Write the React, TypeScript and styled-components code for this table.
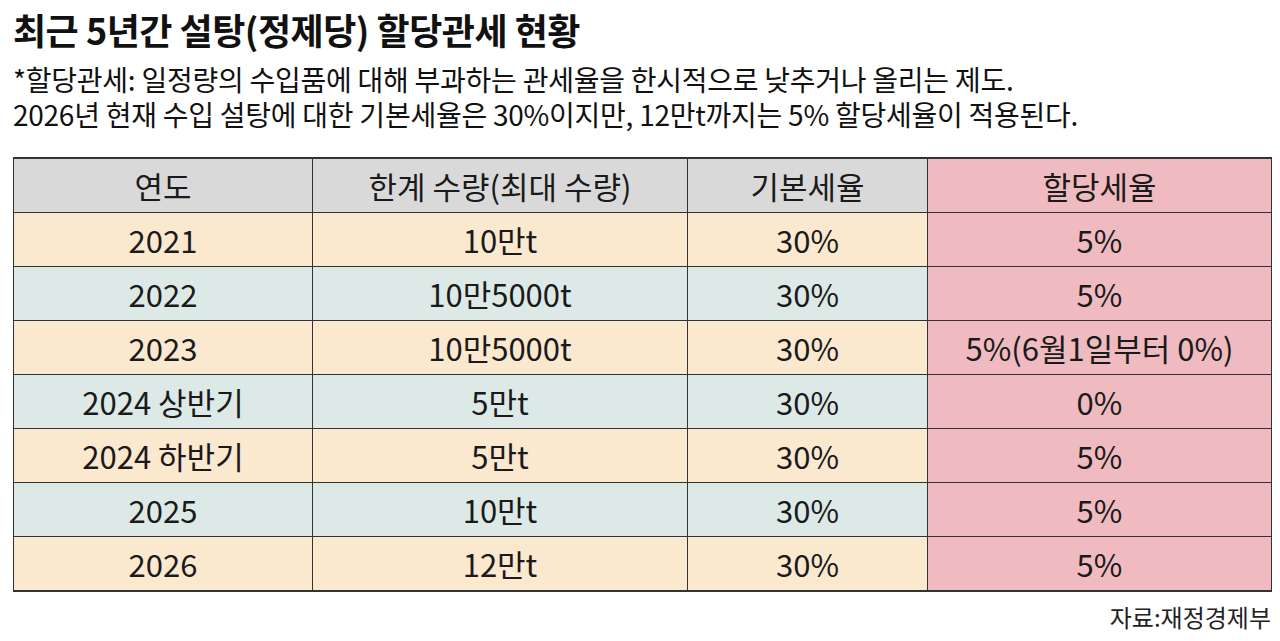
import React from 'react';
import styled, { createGlobalStyle } from 'styled-components';

interface QuotaRow {
  year: string;
  limit: string;
  baseRate: string;
  quotaRate: string;
}

const rows: QuotaRow[] = [
  { year: '2021', limit: '10만t', baseRate: '30%', quotaRate: '5%' },
  { year: '2022', limit: '10만5000t', baseRate: '30%', quotaRate: '5%' },
  { year: '2023', limit: '10만5000t', baseRate: '30%', quotaRate: '5%(6월1일부터 0%)' },
  { year: '2024 상반기', limit: '5만t', baseRate: '30%', quotaRate: '0%' },
  { year: '2024 하반기', limit: '5만t', baseRate: '30%', quotaRate: '5%' },
  { year: '2025', limit: '10만t', baseRate: '30%', quotaRate: '5%' },
  { year: '2026', limit: '12만t', baseRate: '30%', quotaRate: '5%' },
];

const GlobalStyle = createGlobalStyle`
  html, body {
    margin: 0;
    padding: 0;
    background: #ffffff;
  }
  body {
    font-family: "Noto Sans CJK KR", "Noto Sans", sans-serif;
    color: #1a1a1a;
  }
`;

const App: React.FC = () => {
  return (
    <>
      <GlobalStyle />
      <Page>
        <Title>최근 5년간 설탕(정제당) 할당관세 현황</Title>
        <Notes>
          <NoteLine>*할당관세: 일정량의 수입품에 대해 부과하는 관세율을 한시적으로 낮추거나 올리는 제도.</NoteLine>
          <NoteLine>2026년 현재 수입 설탕에 대한 기본세율은 30%이지만, 12만t까지는 5% 할당세율이 적용된다.</NoteLine>
        </Notes>
        <Table>
          <colgroup>
            <col style={{ width: 299 }} />
            <col style={{ width: 375 }} />
            <col style={{ width: 240 }} />
            <col style={{ width: 344 }} />
          </colgroup>
          <thead>
            <tr>
              <HeadCell>연도</HeadCell>
              <HeadCell>한계 수량(최대 수량)</HeadCell>
              <HeadCell>기본세율</HeadCell>
              <HeadCell $quota>할당세율</HeadCell>
            </tr>
          </thead>
          <tbody>
            {rows.map((row, i) => (
              <tr key={row.year}>
                <Cell $tone={i % 2 === 0 ? 'cream' : 'mint'}>{row.year}</Cell>
                <Cell $tone={i % 2 === 0 ? 'cream' : 'mint'}>{row.limit}</Cell>
                <Cell $tone={i % 2 === 0 ? 'cream' : 'mint'}>{row.baseRate}</Cell>
                <Cell $tone="pink">{row.quotaRate}</Cell>
              </tr>
            ))}
          </tbody>
        </Table>
        <Source>자료:재정경제부</Source>
      </Page>
    </>
  );
};

const toneColors = {
  cream: '#fae8cf',
  mint: '#dde9e7',
  pink: '#efbbc0',
};

const Page = styled.div`
  width: 1280px;
  height: 641px;
  box-sizing: border-box;
  padding: 8px 9px 0 13px;
  overflow: hidden;
`;

const Title = styled.h1`
  margin: 0;
  font-size: 36px;
  font-weight: 700;
  line-height: 42px;
  letter-spacing: -0.5px;
  color: #111;
`;

const Notes = styled.div`
  margin-top: 12px;
  display: flex;
  flex-direction: column;
`;

const NoteLine = styled.p`
  margin: 0;
  font-size: 28px;
  line-height: 35px;
  letter-spacing: -0.25px;
  white-space: nowrap;
  color: #111;
`;

const Table = styled.table`
  margin-top: 25px;
  width: 1258px;
  table-layout: fixed;
  border-collapse: collapse;
  border-top: 2px solid #333;
  border-bottom: 2px solid #333;
  border-left: 1px solid #333;
  border-right: 1px solid #333;
`;

const HeadCell = styled.th<{ $quota?: boolean }>`
  height: 53px;
  padding: 0;
  border: 1px solid #333;
  background: ${(p) => (p.$quota ? toneColors.pink : '#d9d9d9')};
  font-size: 31px;
  font-weight: 400;
  line-height: 1;
  text-align: center;
  color: #1a1a1a;
`;

const Cell = styled.td<{ $tone: keyof typeof toneColors }>`
  height: 53px;
  padding: 0;
  border: 1px solid #333;
  background: ${(p) => toneColors[p.$tone]};
  font-size: 31px;
  line-height: 1;
  text-align: center;
  color: #1a1a1a;
`;

const Source = styled.div`
  margin-top: 9px;
  text-align: right;
  font-size: 24px;
  line-height: 32px;
  color: #222;
`;

export default App;
